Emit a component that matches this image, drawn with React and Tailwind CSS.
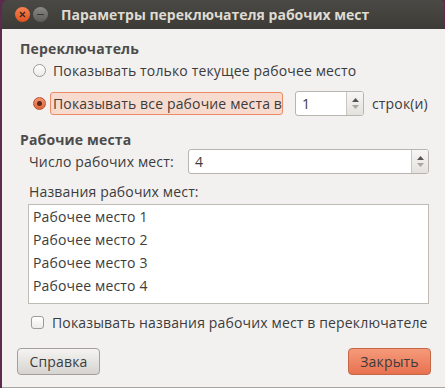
import React from 'react';

const font = { fontFamily: '"Open Sans", "Noto Sans", sans-serif' };

const SpinArrows = () => (
  <div className="flex flex-col items-center justify-center w-[17px] border-l border-[#c9c6c0] bg-gradient-to-b from-[#f7f6f5] to-[#e4e2de] gap-[3px]">
    <svg width="7" height="4" viewBox="0 0 7 4"><path d="M0 4 L3.5 0 L7 4Z" fill="#55534f" /></svg>
    <svg width="7" height="4" viewBox="0 0 7 4"><path d="M0 0 L3.5 4 L7 0Z" fill="#a9a6a0" /></svg>
  </div>
);

const SpinBox = ({ value, className }) => (
  <div className={`flex h-[25px] rounded-[3px] border border-[#b8b5af] bg-white overflow-hidden ${className}`}>
    <div className="flex-1 flex items-center pl-[6px] text-[#3c3c3c]">{value}</div>
    <SpinArrows />
  </div>
);

const Radio = ({ checked }) => (
  <div
    className={`w-[13px] h-[13px] shrink-0 rounded-full border flex items-center justify-center ${
      checked ? 'border-[#b8532c] bg-gradient-to-b from-[#f29370] to-[#e0653c]' : 'border-[#9e9b95] bg-gradient-to-b from-white to-[#ecebe9]'
    }`}
  >
    {checked && <div className="w-[5px] h-[5px] rounded-full bg-[#5a2a18]" />}
  </div>
);

export default function App() {
  const names = ['Рабочее место 1', 'Рабочее место 2', 'Рабочее место 3', 'Рабочее место 4'];
  return (
    <div className="w-[445px] h-[388px] bg-[#5b2a4d] pl-[2px] flex flex-col" style={font}>
      {/* Title bar */}
      <div className="h-[29px] shrink-0 rounded-tl-[6px] rounded-tr-[4px] bg-gradient-to-b from-[#4a4944] to-[#3c3b37] flex items-center pl-[13px] mr-[1px]">
        <div className="w-[15px] h-[15px] rounded-full bg-gradient-to-b from-[#f7824f] to-[#e0511c] flex items-center justify-center">
          <svg width="7" height="7" viewBox="0 0 7 7"><path d="M1 1 L6 6 M6 1 L1 6" stroke="#3a2a22" strokeWidth="1.4" /></svg>
        </div>
        <div className="w-[15px] h-[15px] rounded-full bg-gradient-to-b from-[#8a8984] to-[#5d5c58] ml-[3px] flex items-center justify-center">
          <div className="w-[7px] h-[1.5px] bg-[#3a3935]" />
        </div>
        <div className="ml-[13px] text-[14px] font-bold text-[#dfdbd2]">Параметры переключателя рабочих мест</div>
      </div>

      {/* Body */}
      <div className="flex-1 bg-[#f2f1f0] border-b border-[#a8a6a2] text-[14px] tracking-[0.15px] text-[#3c3c3c] flex flex-col pl-[18px] pr-[14px] pt-[11px]">
        <div className="font-bold text-[#4c4c4c] leading-[18px] h-[18px]">Переключатель</div>
        <div className="pl-[13px] flex items-center gap-[7px] h-[20px] mt-[2px]">
          <Radio />
          <span className="whitespace-nowrap">Показывать только текущее рабочее место</span>
        </div>
        <div className="pl-[13px] flex items-center h-[26px] mt-[10px]">
          <Radio checked />
          <div className="ml-[4px] h-[23px] w-[233px] shrink-0 flex items-center pl-[2px] rounded-[3px] border border-[#ec8a66] bg-[#f8dbcf] whitespace-nowrap">
            Показывать все рабочие места в
          </div>
          <SpinBox value="1" className="ml-[12px] w-[69px] shrink-0" />
          <span className="ml-[8px] whitespace-nowrap">строк(и)</span>
        </div>

        <div className="font-bold text-[#4c4c4c] leading-[18px] h-[18px] mt-[15px]">Рабочие места</div>
        <div className="pl-[9px] flex items-center">
          <span className="w-[159px] shrink-0">Число рабочих мест:</span>
          <SpinBox value="4" className="flex-1 mr-[2px]" />
        </div>
        <div className="pl-[9px] mt-[9px] leading-[18px] h-[18px]">Названия рабочих мест:</div>
        <div className="ml-[8px] mr-[2px] mt-[3px] h-[100px] shrink-0 border border-[#bfbcb6] bg-white pl-[4px]">
          {names.map((n) => (
            <div key={n} className="h-[23px] flex items-center">{n}</div>
          ))}
        </div>
        <div className="pl-[11px] flex items-center gap-[8px] mt-[9px] h-[18px]">
          <div className="w-[13px] h-[13px] shrink-0 rounded-[3px] border border-[#9e9b95] bg-gradient-to-b from-white to-[#ecebe9]" />
          <span className="whitespace-nowrap">Показывать названия рабочих мест в переключателе</span>
        </div>
        <div className="flex justify-between mt-[17px] -ml-[3px]">
          <button className="w-[83px] h-[27px] rounded-[4px] border border-[#a3a09b] bg-gradient-to-b from-[#f5f4f2] to-[#d6d4d0] text-[#3c3c3c]">
            Справка
          </button>
          <button className="w-[83px] h-[27px] rounded-[4px] border border-[#c46747] bg-gradient-to-b from-[#f59a7a] to-[#e8714f] text-[#3c3c3c]">
            Закрыть
          </button>
        </div>
      </div>
    </div>
  );
}
